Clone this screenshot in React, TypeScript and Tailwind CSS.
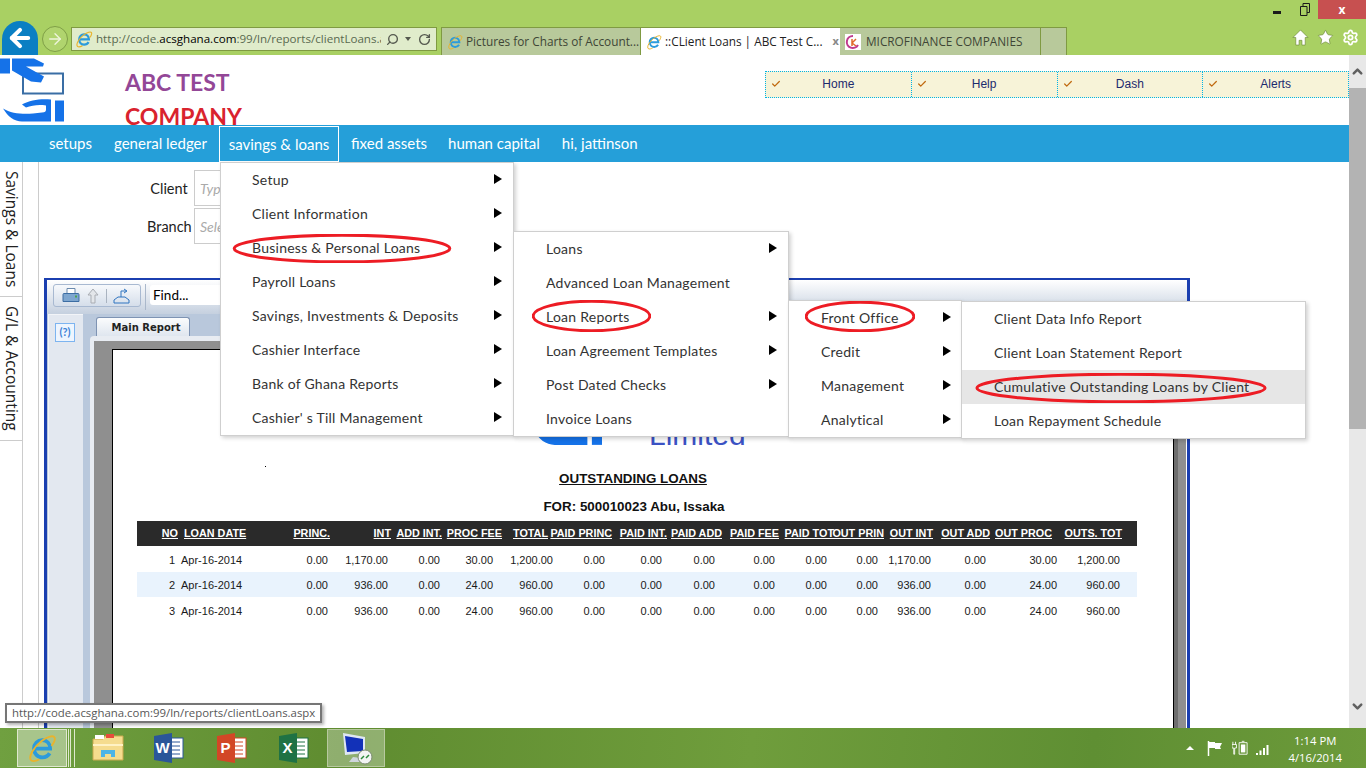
import { ArrowLeft, ArrowRight, Check, ChevronDown, ChevronUp, RotateCw, Search, Settings, Star } from "lucide-react";

const ieFont = "font-['Open_Sans',sans-serif]";

function IeIcon({ size = 18 }: { size?: number }) {
  return (
    <svg width={size} height={size} viewBox="0 0 24 24" fill="none" className="shrink-0">
      <path d="M6 12.500h12.500c0-4-2.600-6.800-6.300-6.800S5.600 8.500 5.600 12.500s2.800 7 6.700 7c2.700 0 4.700-1.300 5.800-3.300" stroke="#2b9bdc" strokeWidth="3" />
      <path d="M3.500 22c-3-2.500 2-11 8-15.500 5-3.500 9.500-5 10.500-3 .8 1.800-.6 4.500-2.500 6.800M3.500 22c1.500 1 4 .3 6.500-1" stroke="#e9b32c" strokeWidth="1.500" />
    </svg>
  );
}

function Logo({ width }: { width: number }) {
  return (
    <svg width={width} viewBox="0 0 64 63" className="shrink-0">
      <rect x="23" y="15" width="40" height="20" fill="none" stroke="#3a6ea5" strokeWidth="2" />
      <path d="M12 0h22l10 5-1 3H26l18 10-3 6-10-1-19-11z M0 0h10v15H0z" fill="#1572e8" />
      <path d="M3 50c8 5 20 6 30 5l9-1c3 0 4-1 4-3v-4c-8-1-14 0-20 2l-4-3c8-5 20-6 29-5v22H22C14 63 8 58 3 50z" fill="#1572e8" />
      <path d="M55 42h9v21h-9z" fill="#1572e8" />
    </svg>
  );
}

function Ellipse({ className }: { className: string }) {
  return (
    <svg viewBox="0 0 100 100" preserveAspectRatio="none" className={"pointer-events-none absolute " + className}>
      <ellipse cx="50" cy="50" rx="49" ry="46" fill="none" stroke="#ed1c24" strokeWidth="3" vectorEffect="non-scaling-stroke" />
    </svg>
  );
}

function MenuRow({ label, arrow = true, hot = false, pad, arrowPad }: { label: string; arrow?: boolean; hot?: boolean; pad: string; arrowPad: string }) {
  return (
    <div className={"flex h-[34px] items-center justify-between pb-[2px] text-[14px] tracking-[0.25px] text-[#333333] " + pad + " " + arrowPad + (hot ? " bg-[#e6e6e6]" : "")}>
      <span className="whitespace-nowrap">{label}</span>
      {arrow && <span className="h-0 w-0 border-y-[5px] border-l-[8px] border-y-transparent border-l-black" />}
    </div>
  );
}

const menuBox = "absolute z-20 border border-[#cfcfcf] bg-white shadow-[2px_2px_4px_rgba(0,0,0,0.18)] font-['Lato',sans-serif]";

const headCols = "grid-cols-[41px_68px_84px_61px_51px_60px_46px_64px_55px_55px_57px_55px_50px_49px_57px_62px_70px_15px]";
const rowCols = "grid-cols-[38px_75px_78px_60px_52px_53px_60px_52px_57px_53px_60px_52px_51px_53px_55px_71px_63px_17px]";

const heads = ["NO", "LOAN DATE", "PRINC.", "INT", "ADD INT.", "PROC FEE", "TOTAL", "PAID PRINC", "PAID INT.", "PAID ADD", "PAID FEE", "PAID TOT", "OUT PRIN", "OUT INT", "OUT ADD", "OUT PROC", "OUTS. TOT"];

const rows = [
  { no: "1", int: "1,170.00", fee: "30.00", total: "1,200.00", bg: "" },
  { no: "2", int: "936.00", fee: "24.00", total: "960.00", bg: "bg-[#e9f3fd]" },
  { no: "3", int: "936.00", fee: "24.00", total: "960.00", bg: "" },
];

function ReportTable() {
  return (
    <div className="w-[1000px] text-[11px] font-['Liberation_Sans',Arial,sans-serif] text-[#1a1a1a]">
      <div className={"grid h-[25px] items-center bg-[#2a2a2a] text-[10.800px] font-bold text-white underline " + headCols}>
        {heads.map((h) => (
          <div key={h} className={h === "LOAN DATE" ? "whitespace-nowrap pl-[6px]" : "flex justify-end whitespace-nowrap"}>
            {h}
          </div>
        ))}
      </div>
      {rows.map((r, i) => {
        const cells = [r.no, "Apr-16-2014", "0.00", r.int, "0.00", r.fee, r.total, "0.00", "0.00", "0.00", "0.00", "0.00", "0.00", r.int, "0.00", r.fee, r.total];
        return (
          <div key={r.no} className={"grid items-center pt-[2px] " + rowCols + " " + r.bg + (i === 1 ? " h-[25px]" : " h-[26px]")}>
            {cells.map((c, j) => (
              <div key={j} className={j === 1 ? "whitespace-nowrap pl-[6px]" : "flex justify-end whitespace-nowrap"}>
                {c}
              </div>
            ))}
          </div>
        );
      })}
    </div>
  );
}

function ReportWindow() {
  return (
    <div className="ml-[5px] mt-[34px] flex h-[600px] w-[1146px] shrink-0 flex-col border-x-[3px] border-t-[2px] border-[#1b3fb0] bg-[#b9c8dc]">
      <div className="flex h-[34px] shrink-0 items-start bg-gradient-to-b from-white to-[#c5d0df] pl-[6px] pt-[4px]">
        <div className="flex h-[23px] w-[88px] items-center gap-[6px] rounded-[3px] border border-[#a8b9d1] bg-gradient-to-b from-[#f7f9fc] to-[#d5deea] pl-[8px]">
          <svg width="18" height="17" viewBox="0 0 18 16">
            <path d="M5 1h8v5H5z" fill="#fff" stroke="#6a89ad" />
            <path d="M2 6h14a1 1 0 0 1 1 1v7H1V7a1 1 0 0 1 1-1z" fill="#7ea6cf" stroke="#3c6da3" />
            <rect x="13" y="8" width="2" height="2" fill="#4aa34a" />
          </svg>
          <svg width="14" height="16" viewBox="0 0 14 16">
            <path d="M7 1l5 6H9v8H5V7H2z" fill="#e3e6ea" stroke="#a9adb3" />
          </svg>
          <span className="h-[14px] w-px bg-[#a9b3c0]" />
          <svg width="17" height="16" viewBox="0 0 17 16">
            <path d="M1 15V12l4-3h7l4 3v3z" fill="none" stroke="#2f74c0" />
            <path d="M8 9V3h5M11 1l3 2-3 2" fill="none" stroke="#2f74c0" />
          </svg>
        </div>
        <span className="ml-[4px] h-[26px] w-px bg-[#aab8cb]" />
        <div className="ml-[4px] mt-px flex h-[20px] w-[200px] items-center rounded-[3px] bg-white pl-[3px] text-[13.500px] text-black">Find...</div>
      </div>
      <div className="flex min-h-0 flex-1">
        <div className="w-[36px] shrink-0 pl-[1px]">
          <div className="h-full w-[35px] border-l border-t border-[#f2f4f8] bg-[#e3e8f0] pl-[6px] pt-[8px]">
            <div className="flex h-[19px] w-[20px] items-center justify-center border border-[#7db4f0] bg-[#eef5fe] text-[11px] font-bold text-[#3b82d6]">(?)</div>
          </div>
        </div>
        <div className="flex min-w-0 flex-1 flex-col">
          <div className="h-[22px] shrink-0 pl-[13px] pt-[3px]">
            <div className="flex h-[19px] w-[94px] items-center justify-center rounded-t-[3px] border-x border-t border-[#7e93b3] bg-gradient-to-b from-[#fbfcfd] to-[#dfe6ef] pl-[6px] text-[10px] font-bold font-['DejaVu_Sans',sans-serif] text-[#222]">
              Main Report
            </div>
          </div>
          <div className="ml-[7px] flex min-h-0 flex-1 rounded-tl-[4px] bg-[#e8ecf2] pl-[4px] pt-[5px]">
            <div className="flex min-h-0 flex-1 border-r border-white bg-[#8f8f8f] pl-[18px] pt-[8px] pr-[12px]">
              <div className="min-h-0 flex-1 border border-black bg-white pl-[24px] shadow-[4px_0_0_#6e6e6e]">
                <div className="flex h-[97px] items-end">
                  <div className="mb-[2px] ml-[393px]">
                    <Logo width={72} />
                  </div>
                  <span className="-mb-[3px] ml-[47px] text-[30px] leading-none font-['Liberation_Sans',Arial,sans-serif] text-[#3b52c4]">Limited</span>
                </div>
                <div className="ml-[128px] mt-[19px] h-px w-px bg-black" />
                <div className="mt-[2px] w-[994px] text-center font-['Liberation_Sans',Arial,sans-serif] text-[13.400px] font-bold leading-[20px] text-[#111]">
                  <div className="mr-[2px] underline">OUTSTANDING LOANS</div>
                  <div className="mt-[8px]">FOR: 500010023 Abu, Issaka</div>
                </div>
                <div className="mt-[4px]">
                  <ReportTable />
                </div>
              </div>
            </div>
          </div>
        </div>
      </div>
    </div>
  );
}

function Chrome() {
  return (
    <div className={"relative flex h-[55px] shrink-0 items-end bg-[#a9d063] text-[11.800px] " + ieFont}>
      <div className="ml-[2px] flex h-[34px] w-[36px] items-center justify-center rounded-t-full bg-[#0a7fc3]">
        <ArrowLeft size={28} strokeWidth={3.500} className="text-white" />
      </div>
      <div className="mb-[3px] ml-[4px] flex h-[26px] w-[26px] items-center justify-center rounded-full border border-[#7f9f47] bg-[#b0d46e]">
        <ArrowRight size={18} strokeWidth={1.800} className="text-[#eef5dc]" />
      </div>
      <div className="mb-[4px] ml-[3px] flex h-[24px] w-[366px] items-center border border-[#7f9a42] bg-[#e0eccb] pl-[3px] pr-[4px]">
        <IeIcon size={18} />
        <span className="ml-[3px] w-[285px] overflow-hidden whitespace-nowrap text-[11.600px] text-[#5a6a50]">
          http://code.<span className="text-black">acsghana.com</span>:99/ln/reports/clientLoans.aspx
        </span>
        <Search size={13} strokeWidth={2.500} className="ml-[5px] -scale-x-100 text-[#55594f]" />
        <span className="ml-[6px] h-0 w-0 border-x-[3px] border-t-[4px] border-x-transparent border-t-[#55594f]" />
        <RotateCw size={13} strokeWidth={2.500} className="ml-[7px] text-[#55594f]" />
      </div>
      <div className="ml-[4px] flex h-[28px] items-stretch border-t border-[#7f9a42] text-[#3e4636]">
        <div className="flex w-[200px] items-center gap-[3px] border-x border-[#7f9a42] bg-[#b8c99b] pl-[5px]">
          <IeIcon size={16} />
          <span className="whitespace-nowrap">Pictures for Charts of Account...</span>
        </div>
        <div className="flex w-[199px] items-center gap-[3px] bg-white pl-[5px] text-[#222]">
          <IeIcon size={16} />
          <span className="whitespace-nowrap">::CLient Loans | ABC Test C...</span>
          <span className="ml-[7px] text-[11px] font-bold text-[#888]">x</span>
        </div>
        <div className="flex w-[201px] items-center gap-[5px] border-r border-[#7f9a42] bg-[#b8c99b] pl-[5px]">
          <svg width="16" height="16" viewBox="0 0 16 16">
            <rect width="16" height="16" fill="#fff" />
            <path d="M8 2a6 6 0 1 0 5 9" fill="none" stroke="#c03a8e" strokeWidth="2" />
            <path d="M7 5v7M7 9l4-4M7 9l4 3" stroke="#e0692a" strokeWidth="1.500" />
          </svg>
          <span className="whitespace-nowrap">MICROFINANCE COMPANIES</span>
        </div>
        <div className="w-[26px] border-r border-[#7f9a42] bg-[#b8c99b]" />
      </div>
      <div className="ml-auto mb-[9px] mr-[7px] flex items-center gap-[8px] text-white">
        <svg width="17" height="17" viewBox="0 0 18 18">
          <path d="M9 1L1 9h3v8h3.500v-5h3v5H14V9h3z" fill="#fff" stroke="#6d8a3a" strokeWidth="0.700" />
        </svg>
        <Star size={17} fill="#fff" strokeWidth={1} className="text-[#6d8a3a]" />
        <Settings size={17} strokeWidth={2.500} className="text-white" />
      </div>
      <div className="absolute right-0 top-0 flex h-[19px] items-start text-[#1b1b1b]">
        <div className="mr-[19px] mt-[11px] h-[3px] w-[8px] bg-[#1b1b1b]" />
        <svg width="10" height="13" viewBox="0 0 10 13" className="mr-[8px] mt-[3px]">
          <path d="M.500 3.500h6.500v9H.500zM3 3.500V.500h6.500v9H7" fill="none" stroke="#1b1b1b" />
        </svg>
        <div className="flex h-[19px] w-[48px] items-center justify-center bg-[#c75050] text-[12px] font-bold text-white">x</div>
      </div>
    </div>
  );
}

function Header() {
  return (
    <div className="flex h-[70px] shrink-0">
      <Logo width={64} />
      <div className="ml-[61px] mt-[10px] h-[60px] text-[23px] font-bold leading-[34px] font-['Lato',sans-serif]">
        <div className="text-[#934797]">ABC TEST</div>
        <div className="text-[#d9232e]">COMPANY</div>
      </div>
      <div className="ml-auto mt-[16px] flex h-[27px] w-[584px] border border-dotted border-[#00b4e6] bg-[#f7f3d8] font-['Liberation_Sans',Arial,sans-serif] text-[12px] text-[#1c2a6e]">
        {["Home", "Help", "Dash", "Alerts"].map((t) => (
          <div key={t} className="relative flex flex-1 items-center justify-center border-r border-dotted border-[#00b4e6] pb-[2px] last:border-r-0">
            <Check size={10} strokeWidth={3} className="absolute left-[5px] top-[7px] text-[#c0690f]" />
            {t}
          </div>
        ))}
      </div>
    </div>
  );
}

function Nav() {
  return (
    <div className="flex h-[37px] shrink-0 items-stretch bg-[#259fd9] pl-[39px] text-[15px] font-['Lato',sans-serif] text-white">
      <div className="flex items-center px-[10px]">setups</div>
      <div className="ml-[2px] flex items-center px-[10px]">general ledger</div>
      <div className="ml-[2px] mt-px flex w-[120px] items-center justify-center border border-white">savings &amp; loans</div>
      <div className="ml-[2px] flex items-center px-[10px]">fixed assets</div>
      <div className="ml-[1px] flex items-center px-[10px]">human capital</div>
      <div className="ml-[2px] flex items-center px-[10px]">hi, jattinson</div>
    </div>
  );
}

function OfficeIcon({ letter, tone }: { letter: string; tone: string }) {
  return (
    <svg width="30" height="30" viewBox="0 0 30 30">
      <rect x="13" y="5" width="16" height="20" fill="#fff" stroke={tone} />
      <path d="M16 9h10M16 13h10M16 17h10M16 21h10" stroke={tone} />
      <path d="M0 3l18-3v30L0 27z" fill={tone} />
      <text x="8.500" y="20" textAnchor="middle" fontFamily="Liberation Sans, Arial, sans-serif" fontWeight="700" fontSize="15" fill="#fff">
        {letter}
      </text>
    </svg>
  );
}

function Tasks() {
  return (
    <div className={"flex h-[40px] shrink-0 items-stretch bg-[linear-gradient(95deg,#70a040_0%,#5f8c30_25%,#6f9d3c_55%,#5f8f33_80%,#6c9a3a_100%)] pl-[17px] text-white " + ieFont}>
      <div className="my-[1px] flex w-[50px] items-center justify-center border border-[#dfe8cf] bg-white/40">
        <IeIcon size={30} />
      </div>
      <div className="my-[1px] ml-[1px] w-[3px] border-x border-[#dfe8cf]" />
      <div className="my-[1px] ml-[1px] w-[3px] border-r border-[#dfe8cf]" />
      <div className="ml-[17px] flex items-center">
        <svg width="32" height="30" viewBox="0 0 32 30">
          <path d="M1 6h10l2-3h18v24H1z" fill="#f5dc8e" stroke="#c9a94f" />
          <rect x="3" y="2" width="9" height="4" fill="#fff" />
          <rect x="14" y="1" width="8" height="4" fill="#e74c3c" />
          <path d="M9 24v-7h14v7h-4v-3h-6v3z" fill="#4db4e6" />
          <path d="M1 12h30" stroke="#fff2c4" strokeWidth="2" />
        </svg>
      </div>
      <div className="ml-[30px] flex items-center">
        <OfficeIcon letter="W" tone="#2a5699" />
      </div>
      <div className="ml-[33px] flex items-center">
        <OfficeIcon letter="P" tone="#d24726" />
      </div>
      <div className="ml-[32px] flex items-center">
        <OfficeIcon letter="X" tone="#1f7244" />
      </div>
      <div className="my-[1px] ml-[18px] flex w-[58px] items-center justify-center border border-[#b8c9a0] bg-white/30">
        <svg width="34" height="34" viewBox="0 0 34 34">
          <path d="M4 2l22 4v16L6 24z" fill="#dfe7f2" />
          <path d="M6 5l18 3v12L8 21z" fill="#1231b8" />
          <path d="M14 26l8 1 2 4H10z" fill="#cfd6dc" />
          <circle cx="26" cy="26" r="7" fill="#f2f4f2" stroke="#7a8a70" />
          <path d="M22 28l3-3M30 24l-3 3" stroke="#2a8a3a" strokeWidth="1.500" />
        </svg>
      </div>
      <div className="ml-auto flex items-center">
        <span className="h-0 w-0 border-x-[4px] border-b-[4px] border-x-transparent border-b-white" />
        <svg width="16" height="16" viewBox="0 0 16 16" className="ml-[13px]">
          <path d="M1.500 1v15" stroke="#fff" strokeWidth="1.500" />
          <path d="M2 2h6v1h7l-2 4 1 2H8V8H2z" fill="#fff" />
        </svg>
        <svg width="16" height="16" viewBox="0 0 18 16" className="ml-[9px]">
          <path d="M1 1v3M4 1v3M0 4h5v4H3v7H2V8H0z" fill="none" stroke="#fff" />
          <path d="M8 2h9v13H8zM11 .500h3" fill="none" stroke="#fff" />
          <rect x="10" y="4" width="5" height="9" fill="#fff" />
        </svg>
        <svg width="16" height="13" viewBox="0 0 16 13" className="ml-[7px]">
          <path d="M1 11h2v2H1zM4.500 8.500h2V13h-2zM8 6h2v7H8zM11.500 3h2v10h-2z" fill="#fff" />
        </svg>
        <div className="ml-[17px] mr-[24px] pt-[1px] text-center text-[11.300px] leading-[17px]">
          <div>1:14 PM</div>
          <div>4/16/2014</div>
        </div>
      </div>
    </div>
  );
}

export default function App() {
  return (
    <div className="relative flex h-[768px] w-[1366px] flex-col overflow-hidden bg-white">
      <Chrome />
      <div className="flex min-h-0 flex-1">
        <div className="flex min-w-0 flex-1 flex-col">
          <Header />
          <Nav />
          <div className="flex min-h-0 flex-1 font-['Lato',sans-serif]">
            <div className={"h-full w-[23px] shrink-0 border-r border-[#cccccc] pt-px " + ieFont}>
              <div className="flex h-[134px] items-center justify-center border-b border-[#cccccc] text-[15.500px] text-[#222] [writing-mode:vertical-rl]">Savings &amp; Loans</div>
              <div className="flex h-[144px] items-center justify-center border-b border-[#cccccc] text-[15.500px] text-[#222] [writing-mode:vertical-rl]">G/L &amp; Accounting</div>
            </div>
            <div className="h-full w-[16px] shrink-0 border-r border-[#cccccc]" />
            <div className="flex min-w-0 flex-1 flex-col overflow-hidden">
              <div className="flex flex-col gap-[2px] pt-[8px]">
                {[
                  ["Client", "Type"],
                  ["Branch", "Select"],
                ].map(([label, hint]) => (
                  <div key={label} className="flex items-center">
                    <span className="ml-[108px] w-[44px] whitespace-nowrap pt-[2px] text-center text-[14.500px] text-[#222]">{label}</span>
                    <div className="ml-[3px] flex h-[36px] w-[200px] items-center border border-[#cccccc] pl-[5px] text-[14px] italic text-[#aaaaaa]">{hint}</div>
                  </div>
                ))}
              </div>
              <ReportWindow />
            </div>
          </div>
        </div>
        <div className="flex w-[17px] shrink-0 flex-col items-center bg-[#e8e8e8]">
          <div className="flex h-[33px] w-full items-center justify-center">
            <ChevronUp size={15} strokeWidth={4} className="text-[#606060]" />
          </div>
          <div className="h-[341px] w-full bg-[#b3b3b3]" />
          <div className="mt-auto flex h-[44px] w-full items-start justify-center pt-[15px]">
            <ChevronDown size={15} strokeWidth={4} className="text-[#606060]" />
          </div>
        </div>
      </div>
      <Tasks />

      <div className={menuBox + " left-[220px] top-[162px] w-[294px]"}>
        {["Setup", "Client Information", "Business & Personal Loans", "Payroll Loans", "Savings, Investments & Deposits", "Cashier Interface", "Bank of Ghana Reports", "Cashier' s Till Management"].map((m) => (
          <MenuRow key={m} label={m} pad="pl-[31px]" arrowPad="pr-[11px]" />
        ))}
      </div>
      <div className={menuBox + " left-[513px] top-[231px] w-[276px]"}>
        {["Loans", "Advanced Loan Management", "Loan Reports", "Loan Agreement Templates", "Post Dated Checks"].map((m, i) => (
          <MenuRow key={m} label={m} arrow={i !== 1} pad="pl-[32px]" arrowPad={i === 1 ? "pr-0" : "pr-[11px]"} />
        ))}
        <MenuRow label="Invoice Loans" arrow={false} pad="pl-[32px]" arrowPad="pr-0" />
      </div>
      <div className={menuBox + " left-[788px] top-[300px] w-[174px]"}>
        {["Front Office", "Credit", "Management", "Analytical"].map((m) => (
          <MenuRow key={m} label={m} pad="pl-[32px]" arrowPad="pr-[10px]" />
        ))}
      </div>
      <div className={menuBox + " left-[961px] top-[301px] w-[345px]"}>
        <MenuRow label="Client Data Info Report" arrow={false} pad="pl-[32px]" arrowPad="pr-0" />
        <MenuRow label="Client Loan Statement Report" arrow={false} pad="pl-[32px]" arrowPad="pr-0" />
        <MenuRow label="Cumulative Outstanding Loans by Client" arrow={false} hot pad="pl-[32px]" arrowPad="pr-0" />
        <MenuRow label="Loan Repayment Schedule" arrow={false} pad="pl-[32px]" arrowPad="pr-0" />
      </div>

      <Ellipse className="z-30 left-[232px] top-[234px] h-[29px] w-[220px]" />
      <Ellipse className="z-30 left-[532px] top-[300px] h-[32px] w-[119px]" />
      <Ellipse className="z-30 left-[805px] top-[301px] h-[31px] w-[110px]" />
      <Ellipse className="z-30 left-[974px] top-[373px] h-[30px] w-[294px]" />

      <div className={"absolute left-[5px] top-[703px] z-30 flex h-[20px] w-[317px] items-center whitespace-nowrap border-2 border-[#767676] bg-white pl-[5px] text-[11.400px] text-[#575757] shadow-[2px_2px_3px_rgba(0,0,0,0.3)] " + ieFont}>
        http://code.acsghana.com:99/ln/reports/clientLoans.aspx
      </div>
    </div>
  );
}
